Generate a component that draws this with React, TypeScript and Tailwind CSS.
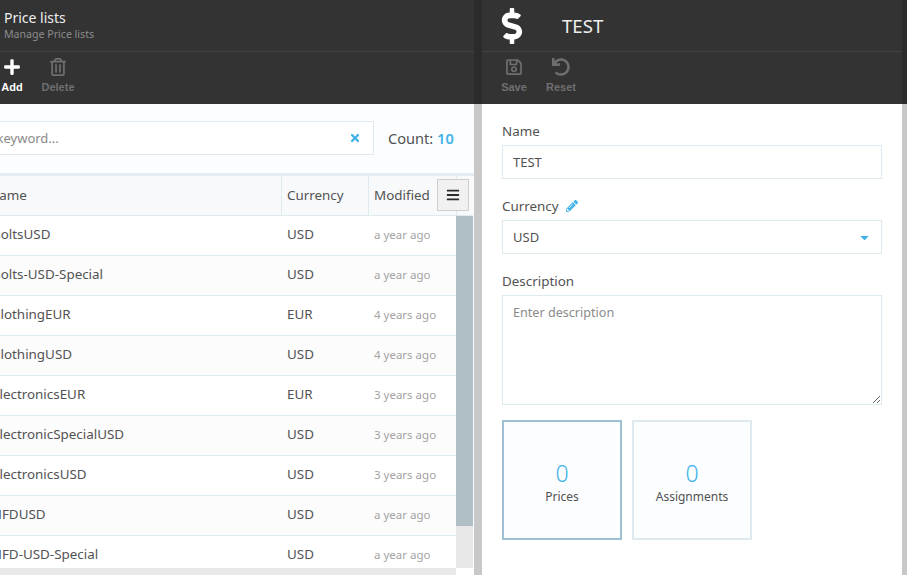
import type { ReactNode } from "react";
import { FaPlus, FaRegTrashAlt, FaDollarSign, FaRegSave, FaUndo, FaPencilAlt, FaTimes, FaBars, FaCaretDown } from "react-icons/fa";

const rows = [
  ["BoltsUSD", "USD", "a year ago"],
  ["Bolts-USD-Special", "USD", "a year ago"],
  ["ClothingEUR", "EUR", "4 years ago"],
  ["ClothingUSD", "USD", "4 years ago"],
  ["ElectronicsEUR", "EUR", "3 years ago"],
  ["ElectronicSpecialUSD", "USD", "3 years ago"],
  ["ElectronicsUSD", "USD", "3 years ago"],
  ["HFDUSD", "USD", "a year ago"],
  ["HFD-USD-Special", "USD", "a year ago"],
];

function Tool({ icon, label, on }: { icon: ReactNode; label: string; on?: boolean }) {
  return (
    <div className={`flex w-[40px] flex-col items-center text-[11px] font-bold leading-[14px] ${on ? "text-white" : "text-[#6f6f6f]"}`}>
      <div className="flex h-[20px] items-center text-[18px]">{icon}</div>
      <span className="mt-[3px] font-['Liberation_Sans',sans-serif]">{label}</span>
    </div>
  );
}

function Gutter({ width }: { width: string }) {
  return (
    <div className={`flex shrink-0 flex-col bg-[#c8c8c8] ${width}`}>
      <div className="h-[104px] bg-[#2b2b2b]" />
    </div>
  );
}

function Tile({ label, active }: { label: string; active?: boolean }) {
  return (
    <div className={`flex h-[120px] w-[120px] flex-col items-center justify-center border-2 bg-[#fbfdfe] pt-[5px] ${active ? "border-[#9ec0d4]" : "border-[#deeaf0]"}`}>
      <div className="text-[23px] font-light leading-[26px] text-[#41b3e8]">0</div>
      <div className="mt-[2px] text-[12px] leading-[18px]">{label}</div>
    </div>
  );
}

export default function App() {
  return (
    <div className="flex h-[575px] w-[907px] overflow-hidden bg-white font-['Noto_Sans',sans-serif] text-[13.4px] text-[#525252]">
      <section className="flex w-[474px] shrink-0 flex-col overflow-hidden bg-[#fbfdfe]">
        <header className="h-[104px] shrink-0 bg-[#333333]">
          <div className="flex h-[52px] flex-col justify-center border-b border-[#414141] pl-[4px]">
            <div className="text-[14px] leading-[18px] text-[#eeeeee]">Price lists</div>
            <div className="text-[10.6px] leading-[15px] text-[#8c8c8c]">Manage Price lists</div>
          </div>
          <div className="-ml-[8px] flex gap-[6px] pt-[5px]">
            <Tool on label="Add" icon={<FaPlus />} />
            <Tool label="Delete" icon={<FaRegTrashAlt />} />
          </div>
        </header>
        <div className="flex h-[72px] shrink-0 items-start border-b-[3px] border-[#e3edf3] pt-[17px]">
          <div className="flex h-[34px] w-[374px] shrink-0 items-center justify-between overflow-hidden border border-l-0 border-[#deeaf0] bg-white pr-[12px]">
            <span className="-ml-[48px] whitespace-nowrap pt-[1px] text-[13px] text-[#8a8a8a]">Search keyword...</span>
            <FaTimes className="shrink-0 text-[12px] text-[#41b3e8]" />
          </div>
          <div className="ml-[14px] mt-[7px] text-[14.6px] leading-[20px]">Count: <span className="font-semibold text-[#41b3e8]">10</span></div>
        </div>
        <div className="flex h-[40px] w-[473px] shrink-0 border-b border-[#deeaf0] bg-[#f8f9fa]">
          <div className="flex h-full w-[282px] items-center overflow-hidden border-r border-[#deeaf0]"><span className="-ml-[11px]">Name</span></div>
          <div className="flex h-full w-[87px] items-center border-r border-[#deeaf0] pl-[5px]">Currency</div>
          <div className="relative flex h-full w-[88px] items-center border-r border-[#deeaf0] pl-[5px]">
            Modified
            <div className="absolute left-[68px] top-[3px] flex h-[32px] w-[32px] items-center justify-center border border-[#cfcfcf] bg-[#f1f1f1] text-[14px] text-[#2b2b2b]"><FaBars /></div>
          </div>
        </div>
        <div className="flex min-h-0 flex-1">
          <div className="flex w-[456px] shrink-0 flex-col">
            <div className="min-h-0 flex-1 overflow-hidden">
              {rows.map((r, i) => (
                <div key={r[0]} className={`flex h-[40px] items-center border-b border-[#deeaf0] pb-[2px] ${i % 2 ? "bg-[#fcfcfc]" : "bg-white"}`}>
                  <div className="w-[282px] overflow-hidden whitespace-nowrap"><span className="-ml-[8px] block">{r[0]}</span></div>
                  <div className="w-[87px] pl-[5px]">{r[1]}</div>
                  <div className="pl-[5px] text-[11.5px] text-[#a3a3a3]">{r[2]}</div>
                </div>
              ))}
            </div>
            <div className="h-[7px] shrink-0 bg-[#e8e8e8]" />
          </div>
          <div className="flex w-[17px] shrink-0 flex-col bg-[#e8e8e8]">
            <div className="h-[310px] shrink-0 bg-[#b0bec5]" />
            <div className="flex-1" />
            <div className="h-[7px] shrink-0 bg-white" />
          </div>
        </div>
      </section>
      <Gutter width="w-[8px]" />
      <section className="flex w-[420px] shrink-0 flex-col bg-white">
        <header className="h-[104px] shrink-0 bg-[#333333]">
          <div className="flex h-[52px] items-center border-b border-[#414141]">
            <FaDollarSign className="ml-[12px] text-[36px] text-white" />
            <span className="ml-[32px] text-[18.6px] text-[#eeeeee]">TEST</span>
          </div>
          <div className="flex gap-[7px] pl-[12px] pt-[5px]">
            <Tool label="Save" icon={<FaRegSave />} />
            <Tool label="Reset" icon={<FaUndo />} />
          </div>
        </header>
        <div className="flex flex-col px-[20px] pt-[18px]">
          <label className="leading-[18px]">Name</label>
          <div className="mt-[5px] flex h-[34px] w-[380px] items-center border border-[#deeaf0] pl-[10px] pt-[1px] text-[13px]">TEST</div>
          <label className="mt-[18px] flex items-center gap-[7px] leading-[18px]">Currency <FaPencilAlt className="text-[12px] text-[#41b3e8]" /></label>
          <div className="mt-[5px] flex h-[34px] w-[380px] items-center justify-between border border-[#deeaf0] pl-[10px] pr-[10px] pt-[1px] text-[13px]">USD <FaCaretDown className="text-[13px] text-[#41b3e8]" /></div>
          <label className="mt-[18px] leading-[18px]">Description</label>
          <textarea readOnly placeholder="Enter description" className="mt-[5px] block h-[110px] w-[380px] border border-[#deeaf0] px-[10px] py-[8px] text-[12.6px] placeholder:text-[#8a8a8a]" />
          <div className="mt-[15px] flex gap-[10px]">
            <Tile label="Prices" active />
            <Tile label="Assignments" />
          </div>
        </div>
      </section>
      <Gutter width="w-[5px]" />
    </div>
  );
}
